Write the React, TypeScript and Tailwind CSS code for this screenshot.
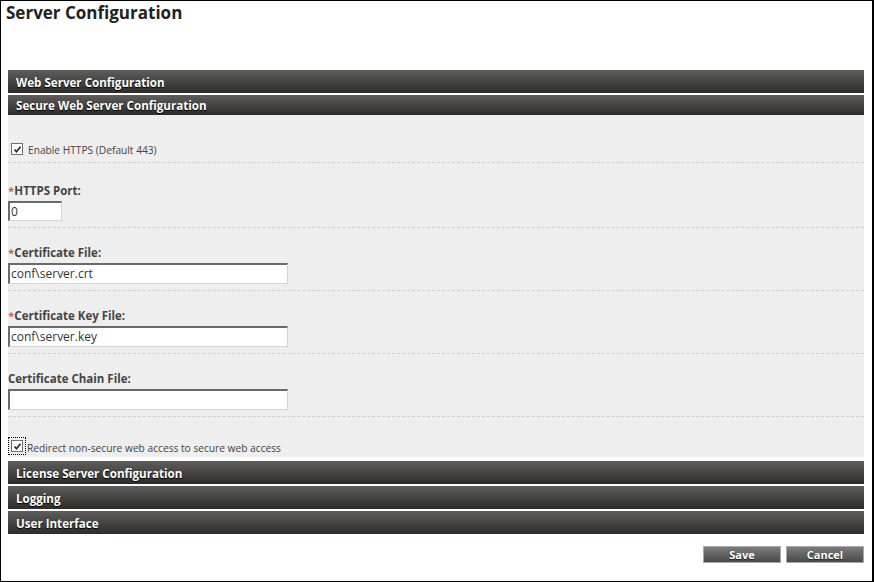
import React from "react";

const font = { fontFamily: '"Open Sans", "Noto Sans", Arial, sans-serif' };

function Bar({ title, tall = true }: { title: string; tall?: boolean }) {
  return (
    <div
      className={`${tall ? "h-[23px] pt-[3px]" : "h-[20px] pt-[2px]"} flex items-center pl-[8px] bg-gradient-to-b from-[#5e5d5b] via-[#464543] to-[#2d2c29] text-white text-[11.6px] font-bold [text-shadow:0_1px_1px_#000]`}
    >
      {title}
    </div>
  );
}

function Check({ focus = false }: { focus?: boolean }) {
  return (
    <span
      className={`inline-flex items-center justify-center p-[2px] ${focus ? "outline outline-1 outline-dotted outline-black" : ""}`}
    >
      <span className="w-[12px] h-[12px] bg-white border border-[#707070] flex items-center justify-center">
        <svg width="9" height="9" viewBox="0 0 9 9">
          <path d="M1.5 4.5 L3.5 6.8 L7.5 1.8" stroke="#222" strokeWidth="1.6" fill="none" />
        </svg>
      </span>
    </span>
  );
}

function Field({
  label,
  required,
  value,
  width,
  first = false,
}: {
  label: string;
  required?: boolean;
  value: string;
  width: string;
  first?: boolean;
}) {
  return (
    <div
      className={`${first ? "pt-[20px]" : "pt-[17px]"} pb-[6px] border-b border-dashed border-[#cfcfcf]`}
    >
      <div className="h-[16px] mb-[2px] text-[11.5px] font-bold text-[#444] leading-[16px] whitespace-nowrap">
        {required && <span className="text-[#c0262c] font-normal">*</span>}
        {label}
      </div>
      <div
        className={`${width} ${first ? "h-[20px]" : "h-[21px]"} bg-white border-t-2 border-l-2 border-r border-b border-t-[#6a6a6a] border-l-[#6a6a6a] border-r-[#d4d4d4] border-b-[#d4d4d4] flex items-center pl-[1px] text-[12px] text-[#333] leading-none`}
      >
        {value}
      </div>
    </div>
  );
}

export default function App() {
  return (
    <div
      style={font}
      className="w-[874px] h-[582px] border border-black border-r-2 bg-white overflow-hidden flex flex-col"
    >
      <div className="h-[69px] pl-[5px] text-[17px] font-bold text-[#222] leading-[23px]">
        Server Configuration
      </div>
      <div className="pl-[7px] pr-[8px] flex flex-col">
        <Bar title="Web Server Configuration" />
        <div className="h-[2px]" />
        <Bar title="Secure Web Server Configuration" tall={false} />
        <div className="bg-[#eeeeee]">
          <div className="h-[48px] border-b border-dashed border-[#cfcfcf] flex items-end pb-[5px] pl-[1px]">
            <Check />
            <span className="ml-[3px] text-[10.2px] text-[#444] leading-[14px]">
              Enable HTTPS (Default 443)
            </span>
          </div>
          <Field label="HTTPS Port:" required value="0" width="w-[54px]" first />
          <Field label="Certificate File:" required value="conf\server.crt" width="w-[280px]" />
          <Field label="Certificate Key File:" required value="conf\server.key" width="w-[280px]" />
          <Field label="Certificate Chain File:" value="" width="w-[280px]" />
          <div className="h-[40px] flex items-start pt-[21px] pl-[1px]">
            <Check focus />
            <span className="ml-[2px] mt-[3px] text-[10.2px] text-[#444] leading-[14px]">
              Redirect non-secure web access to secure web access
            </span>
          </div>
        </div>
        <div className="h-[4px]" />
        <Bar title="License Server Configuration" />
        <div className="h-[2px]" />
        <Bar title="Logging" />
        <div className="h-[2px]" />
        <Bar title="User Interface" />
        <div className="flex justify-end gap-[5px] mt-[12px]">
          <button className="w-[78px] h-[17px] bg-gradient-to-b from-[#7d7d7d] to-[#4a4a4a] border border-[#aaa] text-white text-[11px] font-bold leading-none [text-shadow:0_1px_1px_#222]">
            Save
          </button>
          <button className="w-[78px] h-[17px] bg-gradient-to-b from-[#7d7d7d] to-[#4a4a4a] border border-[#aaa] text-white text-[11px] font-bold leading-none [text-shadow:0_1px_1px_#222]">
            Cancel
          </button>
        </div>
      </div>
    </div>
  );
}
